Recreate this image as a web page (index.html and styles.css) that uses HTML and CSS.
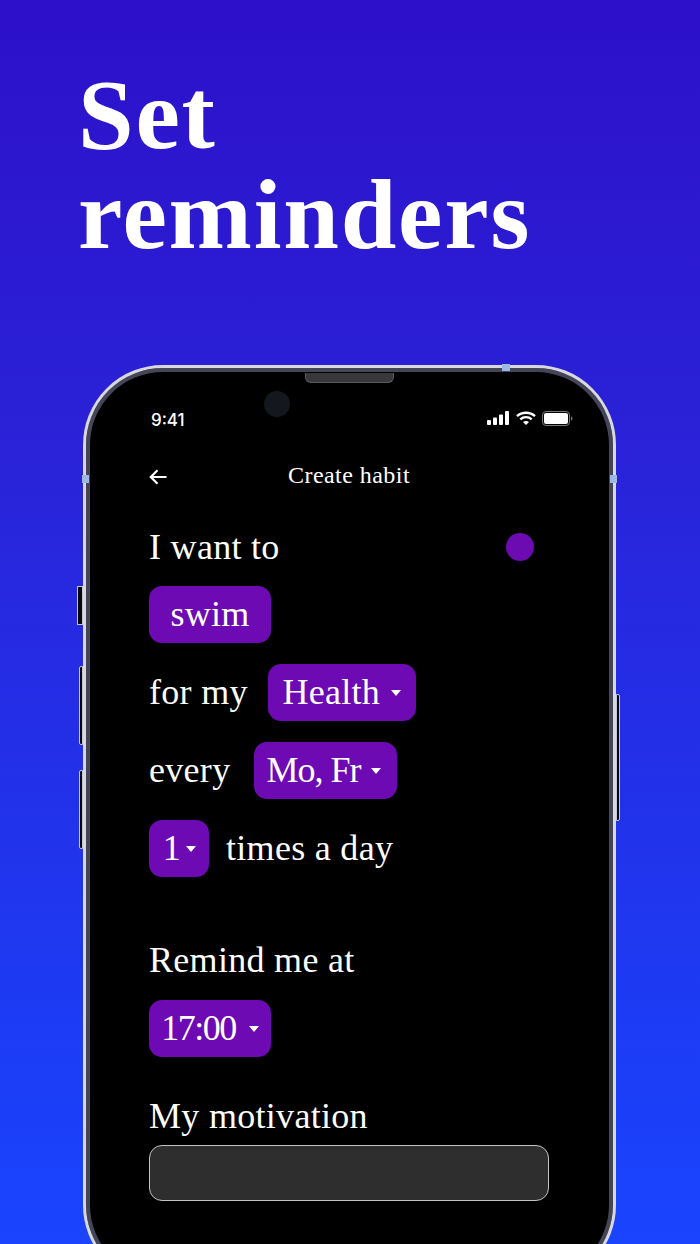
FILE: index.html
```html
<!DOCTYPE html>
<html lang="en">
<head>
<meta charset="utf-8">
<title>Set reminders</title>
<link rel="stylesheet" href="styles.css">
</head>
<body>
<main class="page">
  <h1 class="headline">Set<br>reminders</h1>
  <section class="phone">
    <span class="btn btn-silent"></span>
    <span class="btn btn-up"></span>
    <span class="btn btn-down"></span>
    <span class="btn btn-power"></span>
    <span class="band band-top"></span>
    <span class="band band-left"></span>
    <span class="band band-right"></span>
    <span class="speaker"></span>
    <span class="camera"></span>
    <div class="status">
      <span class="time">9:41</span>
      <div class="status-icons">
        <svg width="23" height="14" viewBox="0 0 23 14" fill="#fff"><rect x="0" y="9" width="4" height="5" rx="1"/><rect x="6" y="6.500" width="4" height="7.500" rx="1"/><rect x="12" y="3.500" width="4" height="10.500" rx="1"/><rect x="18" y="0" width="4" height="14" rx="1"/></svg>
        <svg width="20" height="14" viewBox="0 0 20 14" fill="none" stroke="#fff" stroke-width="2.300"><path d="M1 5.200C6 .6 14 .6 19 5.200"/><path d="M4.300 8.300c3.200-2.900 8.200-2.900 11.400 0"/><path d="M10 14l-3-3c1.700-1.400 4.300-1.400 6 0z" fill="#fff" stroke="none"/></svg>
        <svg width="31" height="15" viewBox="0 0 31 15" fill="none"><rect x=".5" y=".5" width="27" height="14" rx="3.500" stroke="#77787c"/><rect x="2" y="2" width="24" height="11" rx="2" fill="#fff"/><path d="M29 5.500c1 .3 1.500 1.100 1.500 2s-.5 1.700-1.500 2z" fill="#77787c"/></svg>
      </div>
    </div>
    <header class="nav">
      <svg class="back" width="18" height="16" viewBox="0 0 18 16" fill="none" stroke="#fff" stroke-width="2.200"><path d="M17.500 8H2M8.500 1.200L1.800 8l6.700 6.800"/></svg>
      <span class="nav-title">Create habit</span>
    </header>
    <form class="form">
      <div class="row first"><span>I want to</span><span class="dot"></span></div>
      <div class="row"><span class="pill pill-swim">swim</span></div>
      <div class="row"><span class="label-for">for my</span><span class="pill pill-health">Health<i class="caret"></i></span></div>
      <div class="row"><span class="label-every">every</span><span class="pill pill-days">Mo, Fr<i class="caret"></i></span></div>
      <div class="row"><span class="pill pill-count">1<i class="caret"></i></span><span class="times">times a day</span></div>
      <div class="row remind"><span>Remind me at</span></div>
      <div class="row time-row"><span class="pill pill-time">17:00<i class="caret"></i></span></div>
      <div class="row motivation"><span>My motivation</span></div>
      <div class="input"></div>
    </form>
  </section>
</main>
</body>
</html>
```
FILE: styles.css
```css
* { box-sizing: border-box; }
html, body { margin: 0; padding: 0; }
body { width: 700px; height: 1244px; overflow: hidden; }
.page {
  width: 700px; height: 1244px; overflow: hidden;
  background: linear-gradient(180deg, #2d10c9 0%, #2a22d8 35%, #1c3df6 85%, #1a44ff 100%);
  padding-top: 65px;
  font-family: "Liberation Serif", serif;
  color: #fff;
}
.headline {
  margin: 0 0 0 78px;
  font-size: 100px; line-height: 100px; font-weight: 700;
  letter-spacing: 1.800px;
}
.phone {
  position: relative;
  width: 533px; height: 920px;
  margin: 100px 0 0 83px;
  background: #000;
  border: 3px solid #d8d9df;
  border-radius: 80px;
  box-shadow: inset 0 0 0 4px #45455a;
  padding: 0 64px 0 63px;
  font-size: 36px;
}
.btn { position: absolute; border: 1px solid #c4c6d0; background: #08080c; }
.btn-silent { left: -9px; top: 218px; width: 6px; height: 39px; }
.btn-up { left: -7px; top: 298px; width: 4px; height: 79px; border-radius: 2px 0 0 2px; }
.btn-down { left: -7px; top: 402px; width: 4px; height: 79px; border-radius: 2px 0 0 2px; }
.btn-power { right: -7px; top: 326px; width: 4px; height: 127px; border-radius: 0 2px 2px 0; }
.band { position: absolute; background: #9db8e2; }
.band-top { top: -4px; left: 416px; width: 8px; height: 7px; }
.band-left { left: -4px; top: 107px; width: 7px; height: 8px; }
.band-right { right: -4px; top: 107px; width: 7px; height: 8px; }
.speaker {
  position: absolute; top: 5px; left: 219px;
  width: 89px; height: 10px;
  background: #38383a; border-radius: 0 0 6px 6px; border: 1px solid #5a5a5e; border-top: 0;
}
.camera {
  position: absolute; top: 23px; left: 178px;
  width: 26px; height: 26px; border-radius: 50%;
  background: #14181e;
}
.status {
  display: flex; justify-content: space-between; align-items: center;
  padding: 37px 0 0 2px; height: 63px; margin-right: -24px;
}
.time { font-family: Inter, "Liberation Sans", sans-serif; font-size: 17px; font-weight: 500; padding-top: 3px; }
.status-icons { display: flex; align-items: center; gap: 6px; }
.nav {
  position: relative; display: flex; justify-content: center; align-items: center;
  margin-top: 28px; height: 32px;
}
.back { position: absolute; left: 0; top: 10px; }
.nav-title { font-size: 24px; letter-spacing: .45px; }
.form { display: flex; flex-direction: column; width: 400px; }
.row { display: flex; align-items: center; height: 57px; margin-bottom: 21px; letter-spacing: .3px; }
.first { justify-content: space-between; margin-top: 27px; margin-bottom: 11px; padding-right: 15px; }
.dot { width: 28px; height: 28px; border-radius: 50%; background: #6d0bb3; }
.label-for, .label-every, .times { padding-bottom: 2px; }
.pill {
  display: flex; align-items: center; justify-content: center; gap: 11px;
  height: 57px; padding-bottom: 2px; background: #6d0ab4; border-radius: 13px;
}
.caret {
  display: block; width: 0; height: 0; margin-top: 2px;
  border: 5.500px solid transparent; border-top: 6.500px solid #fff; border-bottom: 0;
}
.pill-swim { width: 122px; }
.pill-health { width: 148px; margin-left: 20px; }
.pill-days { width: 143px; margin-left: 24px; letter-spacing: -1px; padding-right: 4px; }
.pill-count { width: 60px; gap: 5px; padding-left: 1px; }
.times { margin-left: 17px; }
.pill-time { width: 122px; letter-spacing: -1.500px; gap: 13px; }
.remind { margin-top: 39px; margin-bottom: 18px; height: 45px; }
.time-row { margin-bottom: 37px; }
.motivation { height: 43px; margin-bottom: 8px; }
.input { width: 400px; height: 56px; background: #2e2e2e; border: 1px solid #c4c4c4; border-radius: 13px; }
```
